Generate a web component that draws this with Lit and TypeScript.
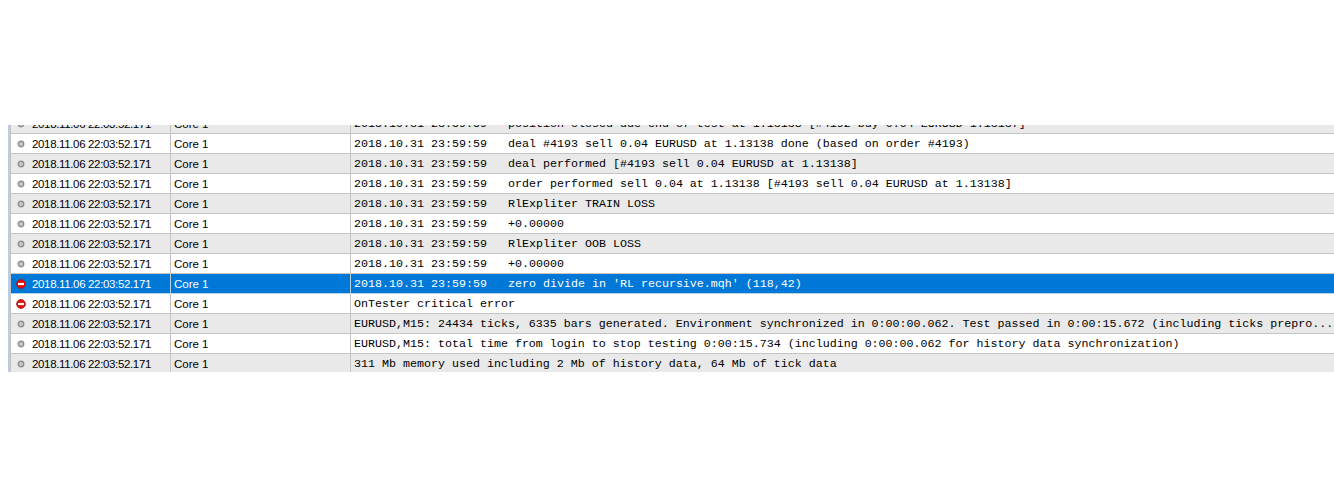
import { LitElement, html, css, svg } from "lit";
import { customElement } from "lit/decorators.js";

const rows: [string, string, boolean?][] = [
  ["2018.10.31 23:59:59", "position closed due end of test at 1.13138 [#4192 buy 0.04 EURUSD 1.13137]"],
  ["2018.10.31 23:59:59", "deal #4193 sell 0.04 EURUSD at 1.13138 done (based on order #4193)"],
  ["2018.10.31 23:59:59", "deal performed [#4193 sell 0.04 EURUSD at 1.13138]"],
  ["2018.10.31 23:59:59", "order performed sell 0.04 at 1.13138 [#4193 sell 0.04 EURUSD at 1.13138]"],
  ["2018.10.31 23:59:59", "RlExpliter TRAIN LOSS"],
  ["2018.10.31 23:59:59", "+0.00000"],
  ["2018.10.31 23:59:59", "RlExpliter OOB LOSS"],
  ["2018.10.31 23:59:59", "+0.00000"],
  ["2018.10.31 23:59:59", "zero divide in 'RL recursive.mqh' (118,42)", true],
  ["", "OnTester critical error", true],
  ["", "EURUSD,M15: 24434 ticks, 6335 bars generated. Environment synchronized in 0:00:00.062. Test passed in 0:00:15.672 (including ticks prepro..."],
  ["", "EURUSD,M15: total time from login to stop testing 0:00:15.734 (including 0:00:00.062 for history data synchronization)"],
  ["", "311 Mb memory used including 2 Mb of history data, 64 Mb of tick data"],
];

const infoIcon = svg`<svg class="ico" viewBox="0 0 10 10" width="10" height="10"><circle cx="5" cy="5" r="2.8" fill="#c4c4c4" stroke="#8c8c8c" stroke-width="1.3"/></svg>`;
const errIcon = svg`<svg class="ico" viewBox="0 0 10 10" width="10" height="10"><circle cx="5" cy="5" r="4.4" fill="#e01010" stroke="#b81008" stroke-width=".8"/><rect x="2" y="3.9" width="6" height="2.2" fill="#fff"/></svg>`;

@customElement("app-root")
export class AppRoot extends LitElement {
  static styles = css`
    :host { display: block; height: 486px; background: #fff; padding-top: 125px; box-sizing: border-box; overflow: hidden; }
    .view { height: 247px; margin-left: 8px; overflow: hidden; border-left: 2px solid #b9cde8; }
    .list { margin-top: -11px; }
    .row { display: grid; grid-template-columns: 160px 180px 1fr; height: 20px; box-sizing: border-box; border-bottom: 1px solid #c4c4c4; border-left: 1px solid #c4c4c4; background: #fff; color: #000; white-space: nowrap; }
    .row.alt { background: #e9e9e9; }
    .row.sel { background: #0078d7; color: #fff; border-bottom-color: #b8d0e4; }
    .cell { display: flex; align-items: center; box-sizing: border-box; padding-top: 1px; border-right: 1px solid #c4c4c4; font: 11.5px/18px "Liberation Sans", Arial, sans-serif; overflow: hidden; }
    .sel .cell { border-right-color: #b8d0e4; }
    .icw { width: 19px; margin-right: 2px; display: flex; justify-content: center; flex: none; }
    .ico { display: block; }
    .stamp { letter-spacing: -0.35px; }
    .c2 { padding-left: 3px; }
    .msg { border-right: 0; padding: 2px 0 0 3px; font: 11.67px/17px "Liberation Mono", "Courier New", monospace; white-space: pre; }
    .t { display: inline-block; width: 154px; }
  `;

  render() {
    return html`<div class="view"><div class="list">
      ${rows.map(([t, m, err], i) => html`
        <div class="row ${this.rowClass(i)}">
          <div class="cell"><span class="icw">${err ? errIcon : infoIcon}</span><span class="stamp">2018.11.06 22:03:52.171</span></div>
          <div class="cell c2">Core 1</div>
          <div class="cell msg">${t ? html`<span class="t">${t}</span>` : ""}${m}</div>
        </div>`)}
    </div></div>`;
  }

  private rowClass(i: number) {
    if (i === 8) return "sel";
    return i % 2 === 0 ? "alt" : "";
  }
}
